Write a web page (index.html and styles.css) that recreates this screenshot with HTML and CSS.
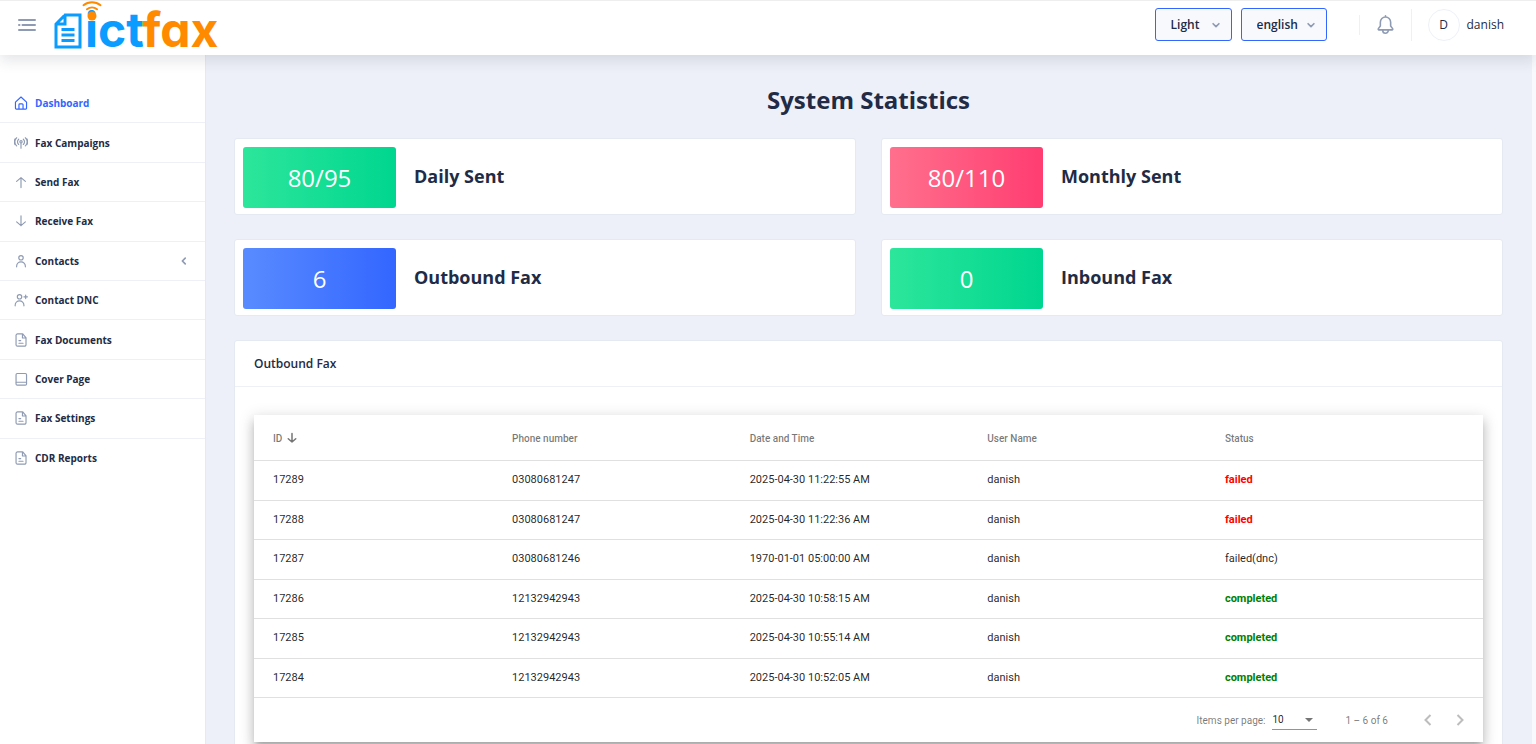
FILE: index.html
```html
<!DOCTYPE html>
<html lang="en">
<head>
<meta charset="utf-8">
<meta name="viewport" content="width=device-width, initial-scale=1">
<title>ICTFax - System Statistics</title>
<link rel="stylesheet" href="styles.css">
</head>
<body>
<svg class="sprite" aria-hidden="true">
  <symbol id="i-file" viewBox="0 0 24 24"><path d="M20.700 8.300l-5.400-6.500A1.300 1.300 0 0 0 14.400 1.500H6A2.500 2.500 0 0 0 3.500 4v16A2.500 2.500 0 0 0 6 22.500h12a2.500 2.500 0 0 0 2.600-2.500V9a1 1 0 0 0 .1-.7zM14.500 2v6.500H20M8.500 17.500h7M8.500 13h3"/></symbol>
  <symbol id="i-person" viewBox="0 0 24 24"><circle cx="12" cy="6.500" r="3.800"/><path d="M4.500 22v-1a7.500 7.500 0 0 1 15 0v1"/></symbol>
  <symbol id="i-down" viewBox="0 0 24 24"><path d="M12 3v17M4.500 13.500l7.500 6.500 7.500-6.500"/></symbol>
  <symbol id="i-chevron" viewBox="0 0 24 24"><path d="M5 9l7 7 7-7"/></symbol>
</svg>
<div class="app">
  <header class="header">
    <button class="menu-toggle" type="button" aria-label="Toggle menu">
      <svg class="menu-icon" viewBox="0 0 18 12"><path d="M1 1h16M4.500 6H17M1 6h.5M1 11h16"/></svg>
    </button>
    <a class="logo" href="#" aria-label="ictfax">
      <svg class="logo-doc" viewBox="0 0 28 36"><path d="M11 2h15v32H2V11zM11 2v9H2"/><path class="logo-lines" d="M7.500 16.500h13M7.500 22h13M7.500 27.500h13"/></svg>
      <span class="logo-text"><span class="logo-ict">ict</span><span class="logo-fax">fax</span>
        <svg class="logo-signal" viewBox="0 0 22 20"><circle cx="11" cy="15" r="4.500"/><path d="M6 8.300a8 8 0 0 1 10 0M2.500 4.200a13.500 13.500 0 0 1 17 0"/></svg>
      </span>
    </a>
    <div class="header-actions">
      <div class="picker theme-picker">
        <select aria-label="Theme"><option>Light</option></select>
        <svg class="picker-arrow"><use href="#i-chevron"/></svg>
      </div>
      <div class="picker language-picker">
        <select aria-label="Language"><option>english</option></select>
        <svg class="picker-arrow"><use href="#i-chevron"/></svg>
      </div>
      <button class="bell" type="button" aria-label="Notifications">
        <svg class="bell-icon" viewBox="0 0 24 24"><path d="M5.500 9a6.500 6.500 0 0 1 13 0v5l2.500 3.200c.5.700.1 1.600-.7 1.600H3.700c-.8 0-1.200-.9-.7-1.600L5.500 14zM8.500 19.500a3.500 3.500 0 0 0 7 0M12 1v1.500"/></svg>
      </button>
      <div class="user"><span class="avatar">D</span><span>danish</span></div>
    </div>
  </header>
  <div class="body">
    <nav class="sidebar" aria-label="Main">
      <ul class="menu">
        <li><a class="active" href="#"><svg class="icon" viewBox="0 0 24 24"><path d="M2.500 10.500L12 1.700l9.500 8.800V21a1.500 1.500 0 0 1-1.500 1.500H4A1.500 1.500 0 0 1 2.500 21zM8.500 22.500V15a1.500 1.500 0 0 1 1.500-1.500h4a1.500 1.500 0 0 1 1.500 1.500v7.500"/></svg>Dashboard</a></li>
        <li><a href="#"><svg class="icon" viewBox="0 0 24 24"><circle cx="12" cy="10" r="2"/><path d="M12 12v9M8 14.500a6 6 0 0 1 0-9M16 14.500a6 6 0 0 0 0-9M4.500 17a9.500 9.500 0 0 1 0-14M19.500 17a9.500 9.500 0 0 0 0-14M2 15a9 9 0 0 1 0-10M22 15a9 9 0 0 0 0-10"/></svg>Fax Campaigns</a></li>
        <li><a href="#"><svg class="icon" viewBox="0 0 24 24"><path d="M12 21.500V4.500M4.500 11L12 4.500l7.500 6.500"/></svg>Send Fax</a></li>
        <li><a href="#"><svg class="icon"><use href="#i-down"/></svg>Receive Fax</a></li>
        <li><a href="#"><svg class="icon"><use href="#i-person"/></svg>Contacts<svg class="expand" viewBox="0 0 24 24"><path d="M15 5l-7 7 7 7"/></svg></a></li>
        <li><a href="#"><svg class="icon" viewBox="0 0 24 24"><circle cx="9.500" cy="6.500" r="3.800"/><path d="M2 22v-1a7.500 7.500 0 0 1 15 0v1M17 6.500h6M20 3.500v6"/></svg>Contact DNC</a></li>
        <li><a href="#"><svg class="icon"><use href="#i-file"/></svg>Fax Documents</a></li>
        <li><a href="#"><svg class="icon" viewBox="0 0 24 24"><rect x="3.500" y="2.500" width="18" height="20" rx="2"/><path d="M4 17.500h17"/></svg>Cover Page</a></li>
        <li><a href="#"><svg class="icon"><use href="#i-file"/></svg>Fax Settings</a></li>
        <li><a href="#"><svg class="icon"><use href="#i-file"/></svg>CDR Reports</a></li>
      </ul>
    </nav>
    <main class="content">
      <h1>System Statistics</h1>
      <div class="stats">
        <section class="card stat"><div class="value success">80/95</div><h2>Daily Sent</h2></section>
        <section class="card stat"><div class="value danger">80/110</div><h2>Monthly Sent</h2></section>
        <section class="card stat"><div class="value primary">6</div><h2>Outbound Fax</h2></section>
        <section class="card stat"><div class="value success">0</div><h2>Inbound Fax</h2></section>
      </div>
      <section class="card report">
        <h3>Outbound Fax</h3>
        <div class="report-body">
          <div class="table-box">
            <table>
              <thead><tr><th><span class="sorted">ID<svg class="sort-icon"><use href="#i-down"/></svg></span></th><th>Phone number</th><th>Date and Time</th><th>User Name</th><th>Status</th></tr></thead>
              <tbody>
                <tr><td>17289</td><td>03080681247</td><td>2025-04-30 11:22:55 AM</td><td>danish</td><td class="failed">failed</td></tr>
                <tr><td>17288</td><td>03080681247</td><td>2025-04-30 11:22:36 AM</td><td>danish</td><td class="failed">failed</td></tr>
                <tr><td>17287</td><td>03080681246</td><td>1970-01-01 05:00:00 AM</td><td>danish</td><td>failed(dnc)</td></tr>
                <tr><td>17286</td><td>12132942943</td><td>2025-04-30 10:58:15 AM</td><td>danish</td><td class="completed">completed</td></tr>
                <tr><td>17285</td><td>12132942943</td><td>2025-04-30 10:55:14 AM</td><td>danish</td><td class="completed">completed</td></tr>
                <tr><td>17284</td><td>12132942943</td><td>2025-04-30 10:52:05 AM</td><td>danish</td><td class="completed">completed</td></tr>
              </tbody>
            </table>
            <div class="paginator">
              <label for="page-size">Items per page:</label>
              <div class="page-size">
                <select id="page-size"><option>10</option></select>
                <svg class="caret" viewBox="0 0 8 4"><path d="M0 0h8L4 4z"/></svg>
              </div>
              <span class="range">1 – 6 of 6</span>
              <button type="button" aria-label="Previous page" disabled><svg viewBox="0 0 8 12"><path d="M6.500 1l-5 5 5 5"/></svg></button>
              <button type="button" aria-label="Next page" disabled><svg viewBox="0 0 8 12"><path d="M1.500 1l5 5-5 5"/></svg></button>
            </div>
          </div>
        </div>
      </section>
    </main>
  </div>
</div>
</body>
</html>
```
FILE: styles.css
```css
* { box-sizing: border-box; }
body {
  margin: 0;
  background: #fff;
  color: #222b45;
  font-family: "Open Sans", "Noto Sans", sans-serif;
  font-size: 12px;
}
h1, h2, h3, ul { margin: 0; padding: 0; }
a { color: inherit; text-decoration: none; }
button, select { font: inherit; color: inherit; }
button { border: 0; padding: 0; background: none; }
svg { fill: none; stroke: currentColor; stroke-linecap: round; stroke-linejoin: round; flex: none; }
.sprite { display: none; }

.app { display: flex; flex-direction: column; height: 100vh; overflow: hidden; }

/* Header */
.header {
  display: flex;
  align-items: center;
  height: 55px;
  flex: none;
  padding: 0 32px 7px 18px;
  border-top: 1px solid #eee;
  background: #fff;
  box-shadow: 0 6px 13px 0 rgba(44, 51, 73, 0.12);
  position: relative;
  z-index: 2;
}
.menu-toggle { display: flex; color: #8f9bb3; }
.menu-icon { width: 18px; height: 12px; stroke-width: 2; }
.logo { display: flex; align-self: flex-start; margin-left: 18px; }
.logo-doc { width: 28px; height: 36px; margin-top: 12px; stroke: #0a9cff; stroke-width: 3; stroke-linejoin: miter; }
.logo-lines { stroke-width: 3; stroke-linecap: butt; }
.logo-text {
  position: relative;
  margin-left: 3px;
  font-family: Inter, sans-serif;
  font-feature-settings: "cv11";
  font-size: 48px;
  font-weight: 700;
  line-height: 58px;
}
.logo-ict { color: #0a9cff; }
.logo-fax { color: #ff8a00; }
.logo-signal { position: absolute; left: -4px; top: 0; width: 22px; height: 20px; color: #ff8a00; stroke-width: 2; }
.logo-signal circle { fill: currentColor; stroke: none; }

.header-actions { display: flex; align-items: center; margin-left: auto; }
.picker { position: relative; margin-right: 9px; }
.picker select {
  width: 100%;
  height: 33px;
  padding: 0 15px;
  appearance: none;
  border: 1px solid #3366ff;
  border-radius: 3px;
  background: #f7f9fc;
  font-weight: 600;
}
.theme-picker { width: 77px; }
.language-picker { width: 86px; }
.picker-arrow { position: absolute; right: 11px; top: 12px; width: 10px; height: 10px; color: #8f9bb3; stroke-width: 4; pointer-events: none; }
.bell {
  display: flex;
  margin-left: 23px;
  padding: 0 16px;
  height: 20px;
  align-items: center;
  border-left: 1px solid #edf1f7;
  color: #8f9bb3;
}
.bell-icon { width: 19px; height: 19px; stroke-width: 2; }
.user { display: flex; align-items: center; gap: 7px; height: 32px; padding-left: 16px; border-left: 1px solid #edf1f7; }
.avatar { width: 32px; height: 32px; line-height: 30px; border: 1px solid #edf1f7; border-radius: 50%; text-align: center; }

/* Sidebar */
.body { display: flex; flex: 1; min-height: 0; }
.sidebar { width: 205px; flex: none; padding-top: 29px; background: #fff; }
.menu { display: grid; grid-auto-rows: 1fr; height: 394px; list-style: none; font-size: 10px; font-weight: 700; }
.menu li { display: flex; border-bottom: 1px solid #edf1f7; }
.menu li:last-child { border-bottom: 0; }
.menu a { display: flex; flex: 1; align-items: center; padding: 0 16px 0 14px; }
.menu .active { color: #3366ff; }
.icon { width: 14px; height: 14px; margin-right: 7px; color: #8f9bb3; stroke-width: 2; }
.active .icon { color: #3366ff; }
.expand { width: 10px; height: 10px; margin-left: auto; color: #8f9bb3; stroke-width: 4; }

/* Content */
.content {
  flex: 1;
  min-width: 0;
  overflow: hidden;
  padding: 29px 29px 24px;
  background: #edf0f8;
  border-right: 4px solid #f7f9fc;
  box-shadow: inset 1px 0 #e4e9f2;
}
h1 { font-size: 24px; line-height: 32px; text-align: center; }
.card { border: 1px solid #e4e9f2; border-radius: 3px; background: #fff; }
.stats { display: grid; grid-template-columns: 1fr 1fr; gap: 24px 25px; margin: 22px 0 24px; }
.stat { display: flex; align-items: center; padding: 8px 0 6px 8px; }
.value {
  flex: 0 0 25%;
  height: 61px;
  border-radius: 3px;
  color: #fff;
  font-size: 24px;
  line-height: 61px;
  text-align: center;
}
.success { background: linear-gradient(to right, #2ce69b, #00d68f); }
.danger { background: linear-gradient(to right, #ff708d, #ff3d71); }
.primary { background: linear-gradient(to right, #598bff, #3366ff); }
.stat h2 { margin-left: 18px; padding-bottom: 3px; font-size: 18px; line-height: 24px; }

.report h3 { padding: 15px 19px 14px; border-bottom: 1px solid #edf1f7; font-size: 12px; line-height: 16px; font-weight: 600; }
.report-body { padding: 28px 19px 24px; }
.table-box {
  background: #fff;
  color: rgba(0, 0, 0, 0.87);
  font-family: Roboto, sans-serif;
  font-size: 11px;
  box-shadow: 0 5px 5px -3px rgba(0, 0, 0, 0.2), 0 8px 10px 1px rgba(0, 0, 0, 0.14), 0 3px 14px 2px rgba(0, 0, 0, 0.12);
}
table { width: 100%; height: 283px; table-layout: fixed; border-collapse: separate; border-spacing: 0; }
th, td { padding: 0 0 1px; border-bottom: 1px solid #e0e0e0; text-align: left; }
th { height: 46px; padding: 1px 0 0; color: rgba(0, 0, 0, 0.54); font-size: 10px; font-weight: 500; }
th:first-child, td:first-child { padding-left: 19px; }
th:first-child, th:last-child { width: 21%; }
.sorted { display: flex; align-items: center; gap: 4px; }
.sort-icon { width: 12px; height: 12px; stroke-width: 3; }
.failed { color: #f00; font-weight: 700; }
.completed { color: #008000; font-weight: 700; }
.paginator { display: flex; align-items: center; justify-content: flex-end; height: 44px; padding-right: 18px; color: rgba(0, 0, 0, 0.54); font-size: 10px; }
.page-size { position: relative; width: 45px; margin-left: 7px; color: rgba(0, 0, 0, 0.87); }
.page-size select { width: 100%; height: 20px; padding: 0; appearance: none; border: 0; border-bottom: 1px solid #949494; background: none; }
.caret { position: absolute; right: 4px; top: 8px; width: 8px; height: 4px; fill: #757575; stroke: none; pointer-events: none; }
.range { margin: 0 32px 0 28px; }
.paginator button { display: flex; justify-content: center; width: 16px; color: #bdbdbd; }
.paginator button + button { margin-left: 16px; margin-right: -3px; }
.paginator button svg { width: 8px; height: 12px; stroke-width: 2; stroke-linecap: butt; stroke-linejoin: miter; }
```
